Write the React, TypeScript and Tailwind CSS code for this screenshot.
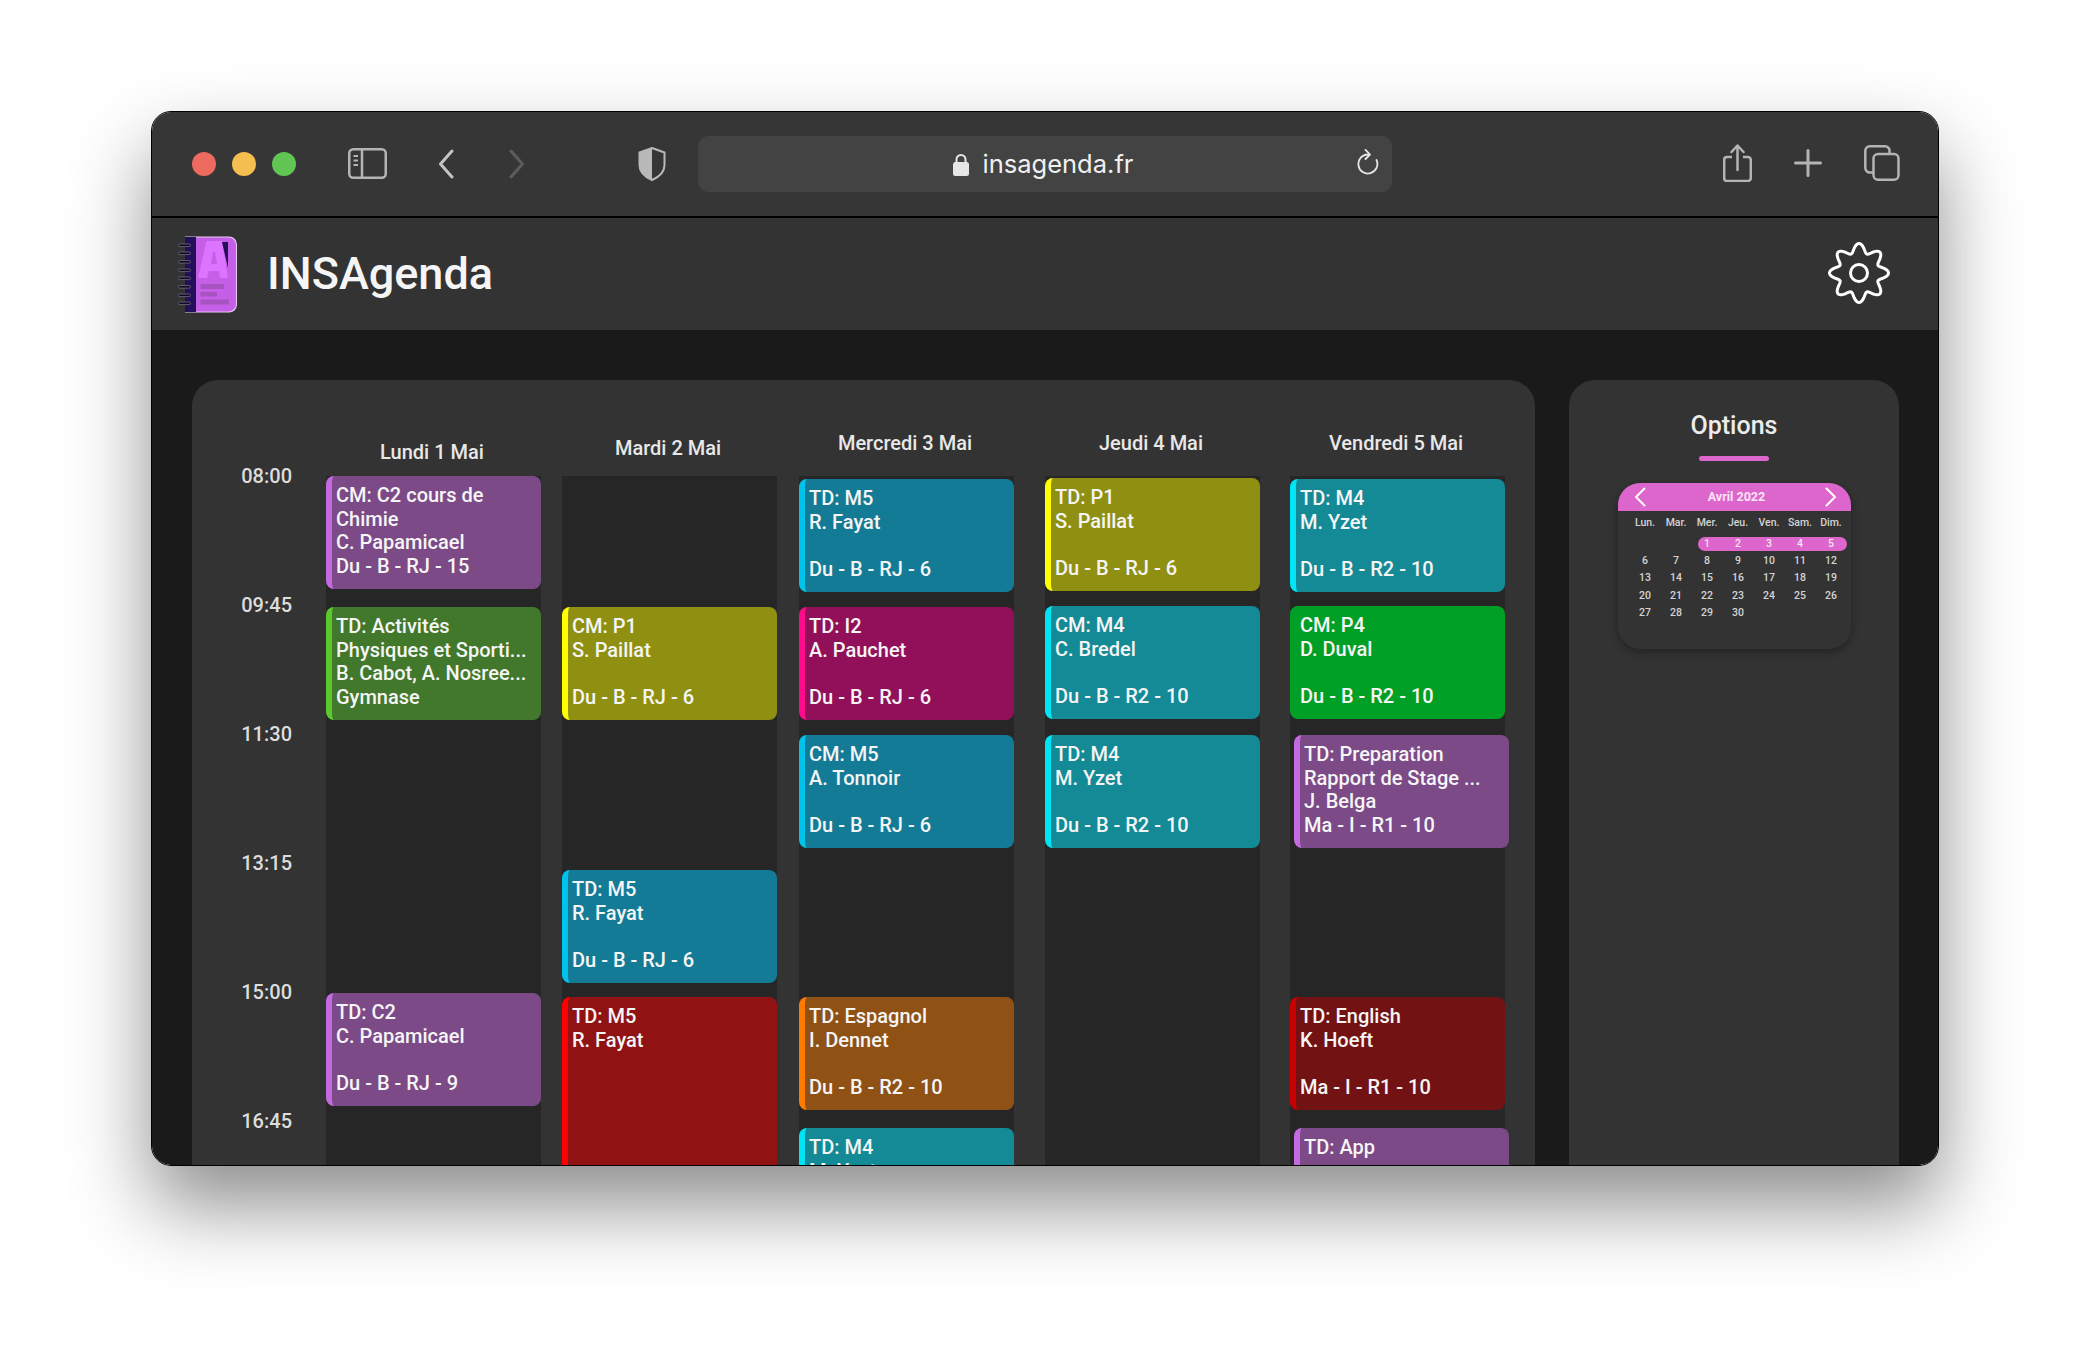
import React from 'react';

interface Course {
  lines: string[];
  color: string;
  extra: string;
}

interface Day {
  title: string;
  titleTop: string;
  margin: string;
  courses: Course[];
}

const purple = 'bg-[#7b4a87] border-[#c46ae0]';
const green = 'bg-[#41782c] border-[#5ac92b]';
const olive = 'bg-[#8f9012] border-[#ffff00]';
const blue = 'bg-[#137b95] border-[#00c3ec]';
const pink = 'bg-[#921059] border-[#ff0a8a]';
const teal = 'bg-[#138a95] border-[#00e5f5]';
const brightGreen = 'bg-[#009f25] border-[#009f25]';
const orange = 'bg-[#8f5114] border-[#ff7b00]';
const red = 'bg-[#901212] border-[#ff0000]';
const darkRed = 'bg-[#731212] border-[#c80000]';

const days: Day[] = [
  {
    title: 'Lundi 1 Mai',
    titleTop: 'pt-[60px]',
    margin: '',
    courses: [
      { lines: ['CM: C2 cours de', 'Chimie', 'C. Papamicael', 'Du - B - RJ - 15'], color: purple, extra: '' },
      { lines: ['TD: Activités', 'Physiques et Sporti...', 'B. Cabot, A. Nosree...', 'Gymnase'], color: green, extra: 'mt-[18px]' },
      { lines: ['TD: C2', 'C. Papamicael', '', 'Du - B - RJ - 9'], color: purple, extra: 'mt-[273px]' },
    ],
  },
  {
    title: 'Mardi 2 Mai',
    titleTop: 'pt-[56px]',
    margin: 'ml-[21px]',
    courses: [
      { lines: ['CM: P1', 'S. Paillat', '', 'Du - B - RJ - 6'], color: olive, extra: 'mt-[131px]' },
      { lines: ['TD: M5', 'R. Fayat', '', 'Du - B - RJ - 6'], color: blue, extra: 'mt-[150px]' },
      { lines: ['TD: M5', 'R. Fayat'], color: red, extra: 'mt-[14px] !h-[300px]' },
    ],
  },
  {
    title: 'Mercredi 3 Mai',
    titleTop: 'pt-[51px]',
    margin: 'ml-[22px]',
    courses: [
      { lines: ['TD: M5', 'R. Fayat', '', 'Du - B - RJ - 6'], color: blue, extra: 'mt-[3px]' },
      { lines: ['TD: I2', 'A. Pauchet', '', 'Du - B - RJ - 6'], color: pink, extra: 'mt-[15px]' },
      { lines: ['CM: M5', 'A. Tonnoir', '', 'Du - B - RJ - 6'], color: blue, extra: 'mt-[15px]' },
      { lines: ['TD: Espagnol', 'I. Dennet', '', 'Du - B - R2 - 10'], color: orange, extra: 'mt-[149px]' },
      { lines: ['TD: M4', 'M. Yzet', '', 'Du - B - R2 - 10'], color: teal, extra: 'mt-[18px]' },
    ],
  },
  {
    title: 'Jeudi 4 Mai',
    titleTop: 'pt-[51px]',
    margin: 'ml-[31px]',
    courses: [
      { lines: ['TD: P1', 'S. Paillat', '', 'Du - B - RJ - 6'], color: olive, extra: 'mt-[2px]' },
      { lines: ['CM: M4', 'C. Bredel', '', 'Du - B - R2 - 10'], color: teal, extra: 'mt-[15px]' },
      { lines: ['TD: M4', 'M. Yzet', '', 'Du - B - R2 - 10'], color: teal, extra: 'mt-[16px]' },
    ],
  },
  {
    title: 'Vendredi 5 Mai',
    titleTop: 'pt-[51px]',
    margin: 'ml-[30px]',
    courses: [
      { lines: ['TD: M4', 'M. Yzet', '', 'Du - B - R2 - 10'], color: teal, extra: 'mt-[3px]' },
      { lines: ['CM: P4', 'D. Duval', '', 'Du - B - R2 - 10'], color: brightGreen, extra: 'mt-[14px]' },
      { lines: ['TD: Preparation', 'Rapport de Stage ...', 'J. Belga', 'Ma - I - R1 - 10'], color: purple, extra: 'mt-[16px] ml-[4px] -mr-[4px]' },
      { lines: ['TD: English', 'K. Hoeft', '', 'Ma - I - R1 - 10'], color: darkRed, extra: 'mt-[149px]' },
      { lines: ['TD: App'], color: purple, extra: 'mt-[18px] ml-[4px] -mr-[4px]' },
    ],
  },
];

const hours = ['08:00', '09:45', '11:30', '13:15', '15:00', '16:45'];
const weekDays = ['Lun.', 'Mar.', 'Mer.', 'Jeu.', 'Ven.', 'Sam.', 'Dim.'];
const calendarRows = [
  ['6', '7', '8', '9', '10', '11', '12'],
  ['13', '14', '15', '16', '17', '18', '19'],
  ['20', '21', '22', '23', '24', '25', '26'],
  ['27', '28', '29', '30'],
];

// wavy 8 lobes outline for the settings button
const gearPath = (() => {
  const points: string[] = [];
  for (let i = 0; i < 240; i++) {
    const a = (i / 240) * Math.PI * 2;
    const r = 25 + 4.5 * Math.cos(a * 8);
    const x = 32 + r * Math.sin(a);
    const y = 32 - r * Math.cos(a);
    points.push(`${x.toFixed(2)} ${y.toFixed(2)}`);
  }
  return `M${points.join('L')}Z`;
})();

const Logo = () => (
  <svg width="59" height="77" viewBox="0 0 59 77" className="shrink-0">
    <path d="M7 .5h44a8 8 0 0 1 8 8v60a8 8 0 0 1-8 8H7z" fill="#e7c9f2" />
    <path d="M8 1.500h42.500a7.500 7.500 0 0 1 7.500 7.500v59a7.500 7.500 0 0 1-7.500 7.500H8z" fill="#c65fe8" />
    <rect x="7" y="1" width="11" height="75" fill="#23105a" />
    {[8, 16, 24.5, 33, 41, 49.5, 58, 66].map((y) => (
      <rect key={y} x="0.500" y={y} width="12" height="2.600" rx="1.200" fill="#120a2e" stroke="#8d8d8d" strokeWidth="0.600" />
    ))}
    <path d="M28.500 5H44L50 42H42L41 35H31L29 42H20z" fill="#dc74ff" />
    <path d="M35 16h2l2 12h-6z" fill="#c65fe8" />
    <path d="M44 6h6v26z" fill="#23105a" />
    <rect x="22.500" y="48" width="23.500" height="5" fill="#a754c0" />
    <rect x="22.500" y="56" width="16.500" height="4.500" fill="#a754c0" />
    <rect x="22.500" y="63.500" width="28.500" height="5" fill="#a754c0" />
  </svg>
);

const BrowserBar = () => (
  <div className="flex h-[106px] shrink-0 items-center border-b-2 border-black bg-[#363636] pl-[40px]">
    <div className="flex gap-[16px]">
      <span className="h-[24px] w-[24px] rounded-full bg-[#ec6a5e]" />
      <span className="h-[24px] w-[24px] rounded-full bg-[#f4bf4f]" />
      <span className="h-[24px] w-[24px] rounded-full bg-[#61c554]" />
    </div>
    <svg width="39" height="31" viewBox="0 0 39 31" fill="none" className="ml-[52px] -mt-[1px]">
      <rect x="1.250" y="1.250" width="36.500" height="28.500" rx="4" stroke="#b4b4b4" strokeWidth="2.500" />
      <path d="M14 1v29" stroke="#b4b4b4" strokeWidth="2.500" />
      <path d="M5.500 8h4.500M5.500 12.500h4.500M5.500 17h4.500" stroke="#b4b4b4" strokeWidth="2" />
    </svg>
    <svg width="16" height="30" viewBox="0 0 16 30" fill="none" className="ml-[51px] -mt-[1px]">
      <path d="M14 2 2.500 15 14 28" stroke="#c4c4c4" strokeWidth="3" strokeLinecap="round" strokeLinejoin="round" />
    </svg>
    <svg width="16" height="30" viewBox="0 0 16 30" fill="none" className="ml-[55px] -mt-[1px]">
      <path d="M2 2l11.500 13L2 28" stroke="#5c5c5c" strokeWidth="3" strokeLinecap="round" strokeLinejoin="round" />
    </svg>
    <svg width="28" height="34" viewBox="0 0 28 34" className="ml-[113px] -mt-[1px]">
      <path d="M14 1 26.500 5.500V18C26.500 25 21 30 14 33 7 30 1.500 25 1.500 18V5.500z" fill="none" stroke="#b9b9b9" strokeWidth="2" />
      <path d="M14 1 1.500 5.500V18C1.500 25 7 30 14 33z" fill="#b9b9b9" />
    </svg>
    <div className="relative ml-[32px] flex h-[56px] w-[694px] items-center justify-center rounded-[11px] bg-[#434343]">
      <div className="ml-[-4px] flex items-center gap-[14px]">
        <svg width="16" height="23" viewBox="0 0 16 23">
          <path d="M3.500 10V6.500a4.500 4.500 0 0 1 9 0V10" fill="none" stroke="#e6e6e6" strokeWidth="2" />
          <rect x="0" y="9" width="16" height="14" rx="2.500" fill="#e6e6e6" />
        </svg>
        <span className="font-['Inter',sans-serif] text-[25.5px] text-[#f0f0f0]">insagenda.fr</span>
      </div>
      <svg width="22" height="26" viewBox="0 0 22 26" fill="none" className="absolute right-[13px] top-[13px]">
        <path d="M11 5.500A9.500 9.500 0 1 0 19.500 11" stroke="#e6e6e6" strokeWidth="1.800" strokeLinecap="round" />
        <path d="M8.500 .8 13 5.500 8.500 10" stroke="#e6e6e6" strokeWidth="1.800" strokeLinecap="round" strokeLinejoin="round" />
      </svg>
    </div>
    <svg width="29" height="38" viewBox="0 0 29 38" fill="none" className="ml-[331px] -mt-[2px]">
      <path d="M9 13H4a2.800 2.800 0 0 0-2.800 2.800v18.400A2.800 2.800 0 0 0 4 37h21a2.800 2.800 0 0 0 2.800-2.800V15.800A2.800 2.800 0 0 0 25 13h-5" stroke="#b4b4b4" strokeWidth="2.500" />
      <path d="M14.500 26V2M8.500 8l6-6.500 6 6.500" stroke="#b4b4b4" strokeWidth="2.500" strokeLinecap="round" strokeLinejoin="round" />
    </svg>
    <svg width="28" height="28" viewBox="0 0 28 28" fill="none" className="ml-[42px] -mt-[2px]">
      <path d="M14 1.500v25M1.500 14h25" stroke="#b4b4b4" strokeWidth="3" strokeLinecap="round" />
    </svg>
    <svg width="36" height="36" viewBox="0 0 36 36" fill="none" className="ml-[42px] -mt-[2px]">
      <path d="M9 27.500H6a4.500 4.500 0 0 1-4.700-4.500V6A4.500 4.500 0 0 1 6 1.300h15A4.500 4.500 0 0 1 25.500 6v3" stroke="#b4b4b4" strokeWidth="2.500" />
      <rect x="9.500" y="9" width="25" height="25.700" rx="4.500" stroke="#b4b4b4" strokeWidth="2.500" />
    </svg>
  </div>
);

const AppHeader = () => (
  <header className="flex h-[112px] shrink-0 items-center bg-[#333333] pl-[26px] pr-[47px]">
    <Logo />
    <h1 className="mb-[2px] ml-[30px] flex-1 text-[45px] font-medium leading-none text-[#f5f5f5]">INSAgenda</h1>
    <svg width="64" height="64" viewBox="0 0 64 64" fill="none" className="mb-[2px]">
      <path d={gearPath} stroke="#ffffff" strokeWidth="3" strokeLinejoin="round" />
      <circle cx="32" cy="32" r="8.500" stroke="#ffffff" strokeWidth="3" />
    </svg>
  </header>
);

const CourseCard = ({ course }: { course: Course }) => (
  <div className={`h-[113px] shrink-0 rounded-[8px] border-l-[6px] pl-[4px] pt-[8px] text-[20px] font-medium leading-[23.5px] text-[#f5f5f5] ${course.color} ${course.extra}`}>
    {course.lines.map((line, i) => (
      <div key={i} className="h-[23.5px] whitespace-nowrap">{line}</div>
    ))}
  </div>
);

const Timetable = () => (
  <section className="flex h-[900px] w-[1343px] shrink-0 rounded-t-[26px] bg-[#333333]">
    <div className="w-[134px] shrink-0 pr-[34px] pt-[84px] text-right text-[20px] font-medium leading-[24px] text-[#dddddd]">
      {hours.map((hour) => (
        <div key={hour} className="h-[129px]">{hour}</div>
      ))}
    </div>
    {days.map((day) => (
      <div key={day.title} className={`flex w-[215px] shrink-0 flex-col ${day.margin}`}>
        <div className={`h-[96px] shrink-0 pr-[3px] text-center text-[20px] font-medium leading-[24px] text-[#e8e8e8] ${day.titleTop}`}>
          {day.title}
        </div>
        <div className="flex flex-1 flex-col bg-[#262626]">
          {day.courses.map((course) => (
            <CourseCard key={course.lines.join()} course={course} />
          ))}
        </div>
      </div>
    ))}
  </section>
);

const MonthCalendar = () => (
  <div className="mt-[22px] h-[166px] w-[233px] rounded-[22px] bg-[#333333] shadow-[0_3px_8px_rgba(0,0,0,0.35)]">
    <div className="flex h-[28px] items-center justify-between rounded-t-[22px] bg-[#dd66cc] pl-[16px] pr-[13px]">
      <svg width="12" height="20" viewBox="0 0 12 20" fill="none">
        <path d="M10.500 1.500 2 10l8.500 8.500" stroke="#ffffff" strokeWidth="2" strokeLinecap="round" strokeLinejoin="round" />
      </svg>
      <span className="ml-[2px] text-[12.5px] font-bold text-[#f8e4f5]">Avril 2022</span>
      <svg width="12" height="20" viewBox="0 0 12 20" fill="none">
        <path d="M1.500 1.500 10 10l-8.500 8.500" stroke="#ffffff" strokeWidth="2" strokeLinecap="round" strokeLinejoin="round" />
      </svg>
    </div>
    <div className="pl-[12px] text-center text-[10.5px] font-medium text-[#d4d4d4]">
      <div className="grid h-[24px] grid-cols-[repeat(7,31px)] items-center">
        {weekDays.map((d) => (
          <span key={d}>{d}</span>
        ))}
      </div>
      <div className="grid h-[17.3px] grid-cols-[repeat(7,31px)] items-center">
        <div className="col-start-3 col-span-5 ml-[6px] flex h-[14px] items-center rounded-full bg-[#dd66cc] text-[#f8e4f5]">
          <span className="ml-[-6px] w-[31px]">1</span>
          {['2', '3', '4', '5'].map((d) => (
            <span key={d} className="w-[31px]">{d}</span>
          ))}
        </div>
      </div>
      {calendarRows.map((row) => (
        <div key={row[0]} className="grid h-[17.3px] grid-cols-[repeat(7,31px)] items-center">
          {row.map((d) => (
            <span key={d}>{d}</span>
          ))}
        </div>
      ))}
    </div>
  </div>
);

const OptionsPanel = () => (
  <aside className="flex h-[900px] w-[330px] shrink-0 flex-col items-center rounded-t-[26px] bg-[#333333] pt-[34px]">
    <h2 className="text-[25px] font-medium leading-[24px] text-[#ececec]">Options</h2>
    <div className="mt-[18px] h-[5px] w-[70px] rounded-full bg-[#dd66cc]" />
    <MonthCalendar />
  </aside>
);

export default function App() {
  return (
    <div className="h-[1356px] overflow-hidden bg-white pl-[151px] pt-[111px] font-['Roboto',sans-serif]">
      <div className="flex h-[1055px] w-[1788px] flex-col overflow-hidden rounded-[20px] border border-black shadow-[0_40px_80px_rgba(0,0,0,0.45)]">
        <BrowserBar />
        <AppHeader />
        <main className="flex flex-1 gap-[34px] overflow-hidden bg-[#1a1a1a] pl-[40px] pt-[50px]">
          <Timetable />
          <OptionsPanel />
        </main>
      </div>
    </div>
  );
}
